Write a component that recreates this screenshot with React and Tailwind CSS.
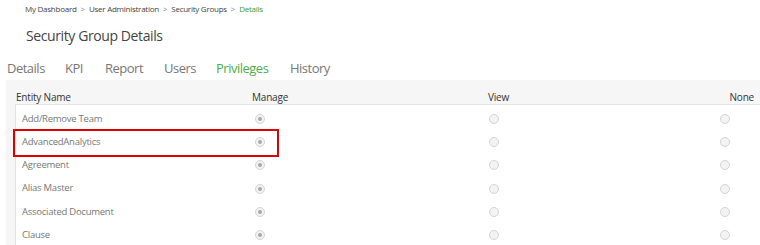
import React from "react";

const ROWS = ["Add/Remove Team", "AdvancedAnalytics", "Agreement", "Alias Master", "Associated Document", "Clause"];
const TABS = [
  { label: "Details", w: "w-[58px]" },
  { label: "KPI", w: "w-[40px]" },
  { label: "Report", w: "w-[59px]" },
  { label: "Users", w: "w-[52px]" },
  { label: "Privileges", w: "w-[74px]", active: true },
  { label: "History", w: "w-[50px]" },
];

function Radio({ checked }) {
  return (
    <span className="inline-flex w-[10px] h-[10px] rounded-full border border-[#d4d4d4] bg-[#f3f3f3] items-center justify-center">
      {checked && <span className="w-[4px] h-[4px] rounded-full bg-[#a8a8a8]" />}
    </span>
  );
}

export default function App() {
  return (
    <div className="w-[760px] h-[245px] overflow-hidden bg-white text-[#555] font-['Open_Sans',sans-serif]">
      {/* breadcrumb */}
      <div className="pl-[25px] pt-[3px] text-[8px] leading-[12px] tracking-[-0.25px] text-[#444] flex gap-[4px]">
        <span>My Dashboard</span><span className="text-[#888]">&gt;</span>
        <span>User Administration</span><span className="text-[#888]">&gt;</span>
        <span>Security Groups</span><span className="text-[#888]">&gt;</span>
        <span className="text-[#3c9a3c]">Details</span>
      </div>

      <h1 className="pl-[26px] pt-[11px] text-[14px] leading-[20px] tracking-[-0.4px] text-[#444]">Security Group Details</h1>

      {/* tabs */}
      <div className="pl-[7px] pt-[13px] flex text-[13px] leading-[18px] tracking-[-0.5px] text-[#777]">
        {TABS.map((t) => (
          <span key={t.label} className={`${t.w} ${t.active ? "text-[#4cae4c]" : ""}`}>{t.label}</span>
        ))}
      </div>

      {/* table */}
      <div className="mt-[3px] ml-[6px] bg-[#f6f6f6] pl-[9px]">
        <div className="grid grid-cols-[237px_236px_1fr_40px] h-[25px] items-end pb-[1px] text-[10px] leading-[12px] tracking-[-0.2px] text-[#333] border-b border-[#e6e6e6]">
          <span className="pl-[1px]">Entity Name</span>
          <span>Manage</span>
          <span>View</span>
          <span className="text-right pr-[6px]">None</span>
        </div>
        <div className="bg-white border-l border-[#e2e2e2] pt-[2px]">
          {ROWS.map((r, i) => (
            <div key={r} className="relative grid grid-cols-[237px_236px_1fr_40px] h-[23.3px] items-center text-[9.5px] tracking-[-0.25px] text-[#777]">
              {i === 1 && <span className="absolute left-[-3px] top-[-1px] w-[266px] h-[28px] border-2 border-[#e00000]" />}
              <span className="pl-[6px]">{r}</span>
              <span className="pl-[2px] flex"><Radio checked /></span>
              <span className="flex"><Radio /></span>
              <span className="flex"><Radio /></span>
            </div>
          ))}
        </div>
      </div>
    </div>
  );
}
